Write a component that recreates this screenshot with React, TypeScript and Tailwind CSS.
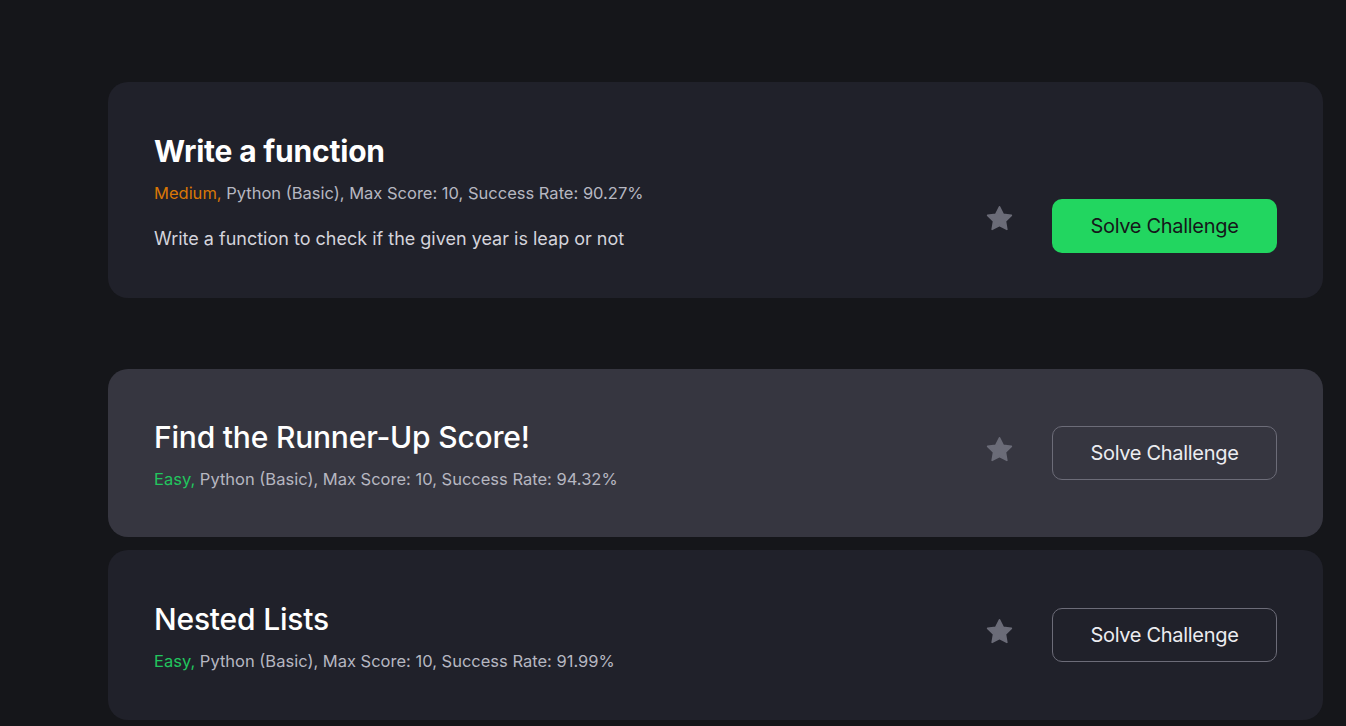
import React from 'react';

type Challenge = {
  title: string;
  level: 'Easy' | 'Medium';
  rate: string;
  description?: string;
  bold?: boolean;
  active?: boolean;
  primary?: boolean;
};

const CHALLENGES: Challenge[] = [
  {
    title: 'Write a function',
    level: 'Medium',
    rate: '90.27%',
    description: 'Write a function to check if the given year is leap or not',
    bold: true,
    primary: true,
  },
  { title: 'Find the Runner-Up Score!', level: 'Easy', rate: '94.32%', active: true },
  { title: 'Nested Lists', level: 'Easy', rate: '91.99%' },
];

const Star = () => (
  <svg width="33" height="32" viewBox="0 0 24 24" className="text-[#6b6c78]">
    <path
      fill="currentColor"
      stroke="currentColor"
      strokeWidth="1.2"
      strokeLinejoin="round"
      d="M12 2.8l2.75 5.6 6.15.9-4.45 4.33 1.05 6.12L12 16.86l-5.5 2.9 1.05-6.13L3.1 9.3l6.15-.9z"
    />
  </svg>
);

const Card: React.FC<{ c: Challenge; className: string }> = ({ c, className }) => (
  <div
    className={`flex items-center justify-between rounded-[20px] px-[46px] ${
      c.active ? 'bg-[#363640]' : 'bg-[#20212a]'
    } ${className}`}
  >
    <div className="flex flex-col pt-[4px]">
      <h3
        className={`text-[30px] leading-[36px] text-white tracking-[-0.2px] ${
          c.bold ? 'font-bold' : 'font-medium'
        }`}
      >
        {c.title}
      </h3>
      <p className="mt-[12px] text-[16.5px] leading-6 text-[#b6b7c1]">
        <span className={c.level === 'Medium' ? 'text-[#d97706]' : 'text-[#22c55e]'}>{c.level},</span>{' '}
        Python (Basic), Max Score: 10, Success Rate: {c.rate}
      </p>
      {c.description && (
        <p className="mt-[21px] text-[18px] leading-[26px] text-[#d4d4dc]">{c.description}</p>
      )}
    </div>
    <div className={`flex items-center gap-[36px] ${c.primary ? 'mt-[72px]' : ''}`}>
      <div className={c.primary ? '-mt-[14px]' : '-mt-[6px]'}>
        <Star />
      </div>
      <button
        className={`w-[225px] h-[54px] rounded-[10px] text-[20px] tracking-[-0.3px] ${
          c.primary
            ? 'bg-[#22d660] text-[#15161a]'
            : 'border border-[#6c6c78] text-[#ececf0] bg-transparent'
        }`}
      >
        Solve Challenge
      </button>
    </div>
  </div>
);

export default function App() {
  return (
    <div
      className="min-h-screen bg-[#15161a] pt-[82px] pl-[108px] pr-[23px]"
      style={{ fontFamily: 'Inter, "Noto Sans", sans-serif' }}
    >
      <Card c={CHALLENGES[0]} className="h-[216px]" />
      <Card c={CHALLENGES[1]} className="h-[168px] mt-[71px]" />
      <Card c={CHALLENGES[2]} className="h-[170px] mt-[13px]" />
    </div>
  );
}
